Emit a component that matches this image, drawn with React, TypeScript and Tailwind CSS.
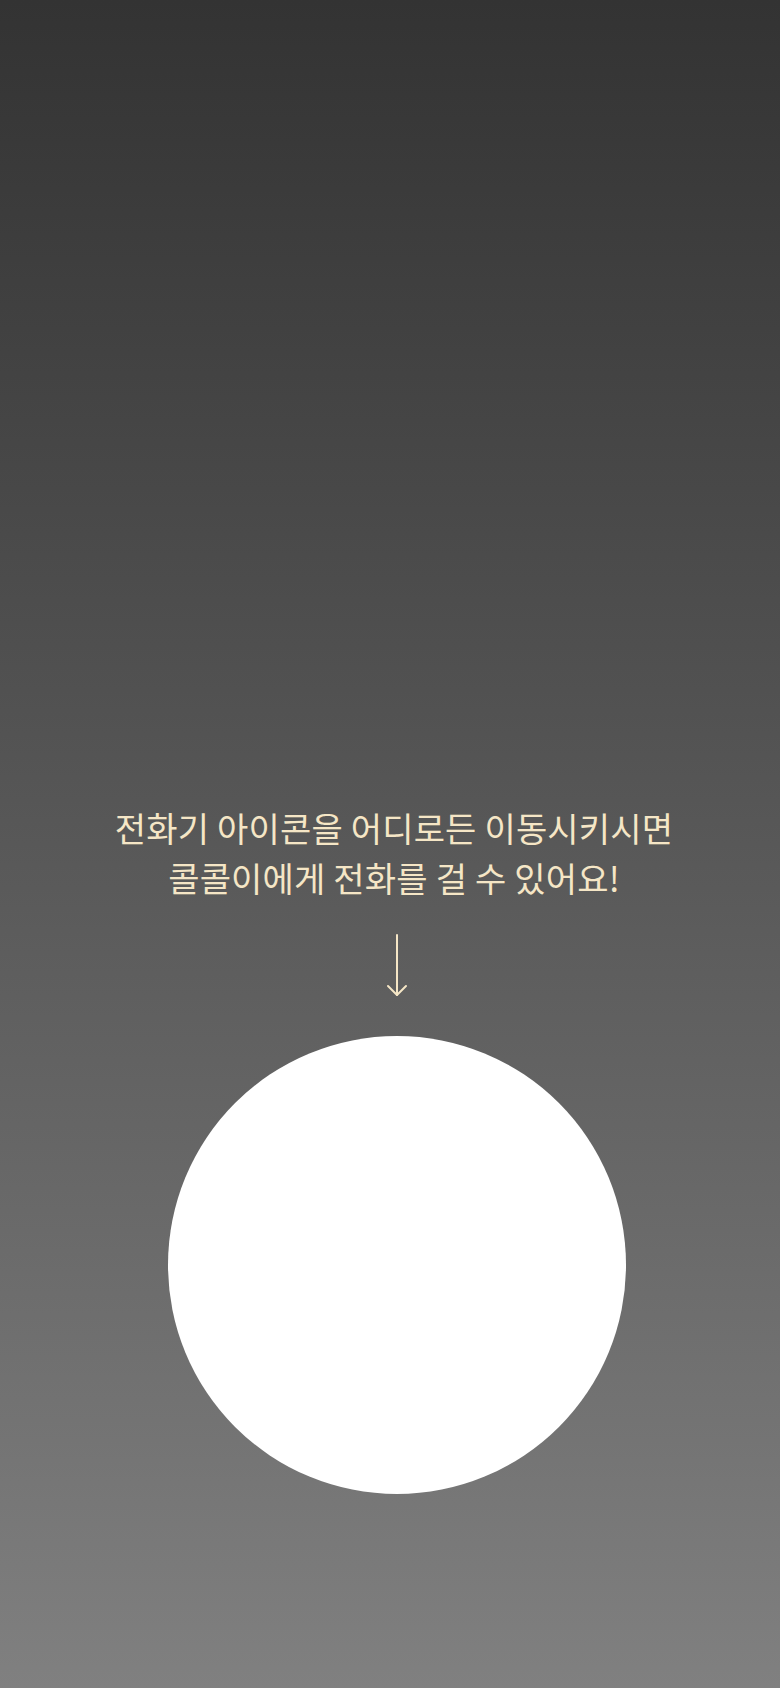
export default function App() {
  return (
    <div className="h-[1688px] w-full bg-gradient-to-b from-[#333333] to-[#808080] flex flex-col">
      {/* hint text */}
      <div className="pt-[803px] pl-[8px]">
        <p
          className="text-center text-[34px] leading-[50px] tracking-[0.2px] text-[#f5e6c6]"
          style={{ fontFamily: '"Noto Sans CJK KR", "Noto Sans", sans-serif' }}
        >
          전화기 아이콘을 어디로든 이동시키시면
          <br />
          콜콜이에게 전화를 걸 수 있어요!
        </p>
      </div>

      <div className="flex flex-col items-center pl-[14px]">
        {/* down arrow */}
        <svg
          className="mt-[31px]"
          width="24"
          height="64"
          viewBox="0 0 24 64"
          fill="none"
          stroke="#f5e6c6"
          strokeWidth="2"
          strokeLinecap="round"
          strokeLinejoin="round"
        >
          <line x1="12" y1="1" x2="12" y2="61" />
          <polyline points="3,52 12,61 21,52" />
        </svg>

        {/* phone drop target */}
        <div className="mt-[38px] h-[458px] w-[458px] rounded-full bg-white" />
      </div>
    </div>
  )
}
